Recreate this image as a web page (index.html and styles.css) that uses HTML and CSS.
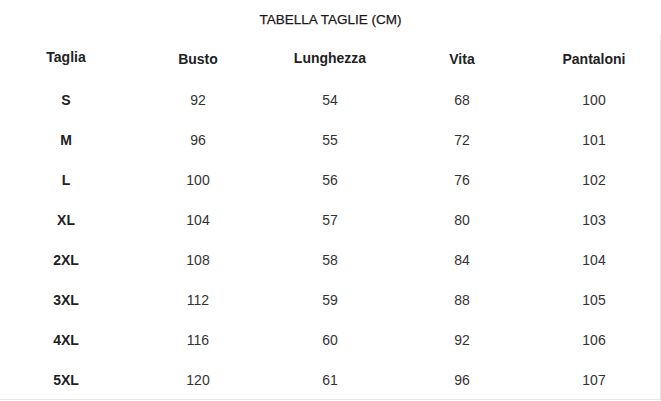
FILE: index.html
```html
<!DOCTYPE html>
<html lang="it">
<head>
<meta charset="utf-8">
<link rel="stylesheet" href="styles.css">
</head>
<body>
<div class="title">TABELLA TAGLIE (CM)</div>
<div class="table">
  <div class="row head">
    <div class="cell up2">Taglia</div>
    <div class="cell">Busto</div>
    <div class="cell up1">Lunghezza</div>
    <div class="cell">Vita</div>
    <div class="cell">Pantaloni</div>
  </div>
  <div class="row"><div class="cell size">S</div><div class="cell">92</div><div class="cell">54</div><div class="cell">68</div><div class="cell">100</div></div>
  <div class="row"><div class="cell size">M</div><div class="cell">96</div><div class="cell">55</div><div class="cell">72</div><div class="cell">101</div></div>
  <div class="row"><div class="cell size">L</div><div class="cell">100</div><div class="cell">56</div><div class="cell">76</div><div class="cell">102</div></div>
  <div class="row"><div class="cell size">XL</div><div class="cell">104</div><div class="cell">57</div><div class="cell">80</div><div class="cell">103</div></div>
  <div class="row"><div class="cell size">2XL</div><div class="cell">108</div><div class="cell">58</div><div class="cell">84</div><div class="cell">104</div></div>
  <div class="row"><div class="cell size">3XL</div><div class="cell">112</div><div class="cell">59</div><div class="cell">88</div><div class="cell">105</div></div>
  <div class="row"><div class="cell size">4XL</div><div class="cell">116</div><div class="cell">60</div><div class="cell">92</div><div class="cell">106</div></div>
  <div class="row"><div class="cell size">5XL</div><div class="cell">120</div><div class="cell">61</div><div class="cell">96</div><div class="cell">107</div></div>
</div>
</body>
</html>
```

FILE: styles.css
```css
html, body {
  margin: 0;
  padding: 0;
  background: #fff;
}
body {
  font-family: "Liberation Sans", Arial, sans-serif;
  color: #333;
  width: 661px;
}
.title {
  height: 35px;
  box-sizing: border-box;
  padding-top: 4px;
  line-height: 31px;
  font-size: 13.5px;
  text-align: center;
  color: #1a1a1a;
  -webkit-text-stroke: 0.25px #1a1a1a;
}
.table {
  width: 660px;
  border-right: 1px solid #e6e6e6;
  border-bottom: 1px solid #e6e6e6;
}
.row {
  display: grid;
  grid-template-columns: repeat(5, 132px);
  height: 40px;
}
.row.head {
  height: 44px;
}
.cell {
  display: flex;
  align-items: center;
  justify-content: center;
  font-size: 14px;
  padding-top: 2px;
  box-sizing: border-box;
}
.head .cell {
  font-weight: bold;
  color: #222;
  padding-top: 3px;
}
.head .cell.up2 {
  padding-top: 0;
}
.head .cell.up1 {
  padding-top: 1px;
}
.cell.size {
  font-weight: bold;
  color: #222;
}
```
